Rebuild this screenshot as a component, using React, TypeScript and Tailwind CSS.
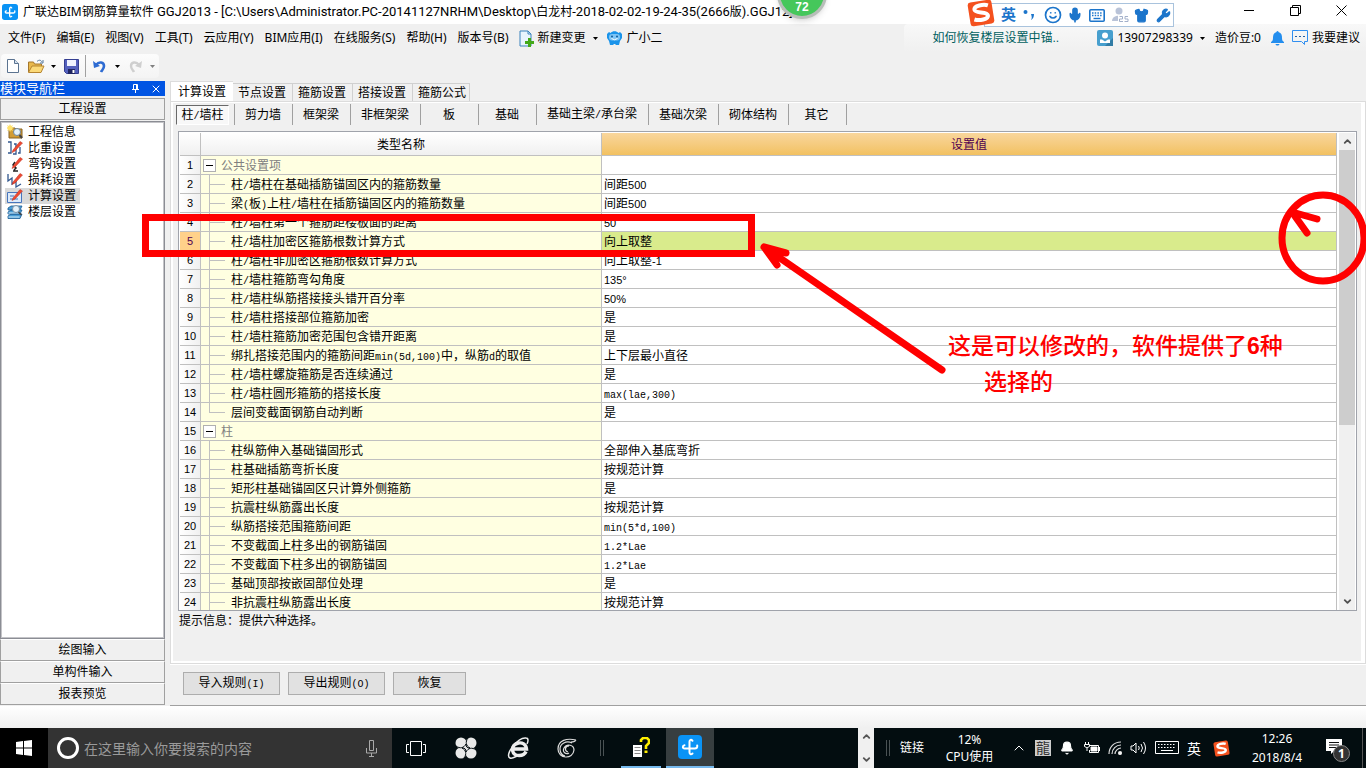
import React from "react";
import { ChevronDown, ChevronUp, Mic, Shirt, Smile, Wrench, Bell, X } from "lucide-react";

const songti = "font-['Liberation_Sans','Noto_Sans_CJK_SC',sans-serif]";
const yahei = "font-['Noto_Sans','Noto_Sans_CJK_SC',sans-serif]";

/* Latin runs take a half-width face beside the full-width Chinese glyphs. */
function Song({ children }: { children: string }) {
  return (
    <>
      {children.split(/([\x20-\x7e°]+)/).map((part, i) => {
        if (i % 2 === 0) return part;
        const numeric = /^[\d°%-]+$/.test(part);
        return (
          <span key={i} className={numeric ? "text-[11px]" : "font-['Liberation_Mono',monospace] text-[10px]"}>{part}</span>
        );
      })}
    </>
  );
}

type Row = { name: string; value?: string; group?: boolean; last?: boolean };

const rows: Row[] = [
  { name: "公共设置项", group: true },
  { name: "柱/墙柱在基础插筋锚固区内的箍筋数量", value: "间距500" },
  { name: "梁(板)上柱/墙柱在插筋锚固区内的箍筋数量", value: "间距500" },
  { name: "柱/墙柱第一个箍筋距楼板面的距离", value: "50" },
  { name: "柱/墙柱加密区箍筋根数计算方式", value: "向上取整" },
  { name: "柱/墙柱非加密区箍筋根数计算方式", value: "向上取整-1" },
  { name: "柱/墙柱箍筋弯勾角度", value: "135°" },
  { name: "柱/墙柱纵筋搭接接头错开百分率", value: "50%" },
  { name: "柱/墙柱搭接部位箍筋加密", value: "是" },
  { name: "柱/墙柱箍筋加密范围包含错开距离", value: "是" },
  { name: "绑扎搭接范围内的箍筋间距min(5d,100)中，纵筋d的取值", value: "上下层最小直径" },
  { name: "柱/墙柱螺旋箍筋是否连续通过", value: "是" },
  { name: "柱/墙柱圆形箍筋的搭接长度", value: "max(lae,300)" },
  { name: "层间变截面钢筋自动判断", value: "是", last: true },
  { name: "柱", group: true },
  { name: "柱纵筋伸入基础锚固形式", value: "全部伸入基底弯折" },
  { name: "柱基础插筋弯折长度", value: "按规范计算" },
  { name: "矩形柱基础锚固区只计算外侧箍筋", value: "是" },
  { name: "抗震柱纵筋露出长度", value: "按规范计算" },
  { name: "纵筋搭接范围箍筋间距", value: "min(5*d,100)" },
  { name: "不变截面上柱多出的钢筋锚固", value: "1.2*Lae" },
  { name: "不变截面下柱多出的钢筋锚固", value: "1.2*Lae" },
  { name: "基础顶部按嵌固部位处理", value: "是" },
  { name: "非抗震柱纵筋露出长度", value: "按规范计算" },
];

function AppLogo({ className }: { className: string }) {
  return (
    <svg viewBox="0 0 24 24" className={className} aria-hidden="true">
      <rect width="24" height="24" rx="4" fill="#0a93f5" />
      <path d="M14.500 5.800c-1.400-1.700-3-1-3 .9v10.600c0 2 1.500 2.600 3 1.200" fill="none" stroke="#fff" strokeWidth="2" strokeLinecap="round" />
      <path d="M6.500 10.200c-2.200.4-2.200 3.300.2 3.300h10c2 0 2.800-1 2.500-3" fill="none" stroke="#fff" strokeWidth="2" strokeLinecap="round" />
    </svg>
  );
}

function SogouLogo({ className }: { className: string }) {
  return (
    <svg viewBox="0 0 28 28" className={className} aria-hidden="true">
      <g transform="rotate(-9 14 14)">
        <rect x="2" y="2" width="24" height="24" rx="3" fill="#f4511e" />
        <path d="M22 7.500C18 5.500 8 5.500 8 9.800c0 4 12.500 3.200 12.500 7.600 0 4.200-9.500 4.200-14 2" fill="none" stroke="#fff" strokeWidth="4" />
      </g>
    </svg>
  );
}

function Caret({ className = "text-black" }: { className?: string }) {
  return (
    <svg viewBox="0 0 5 3" className={`h-[3px] w-[5px] ${className}`} aria-hidden="true">
      <path d="M0 0h5L2.500 3z" fill="currentColor" />
    </svg>
  );
}

function TitleBar() {
  const latin = "font-['Roboto',sans-serif] text-[13px]";
  return (
    <header className="flex h-6 shrink-0 items-center bg-white pl-[2px]">
      <AppLogo className="h-4 w-4" />
      <h1 className={`ml-[5px] flex-1 overflow-hidden whitespace-nowrap text-[12px] font-normal leading-6 ${yahei}`}>
        广联达BIM钢筋算量软件{" "}
        <span className={latin}>GGJ2013 - [C:\Users\Administrator.PC-20141127NRHM\Desktop\</span>白龙村
        <span className={latin}>-2018-02-02-19-24-35(2666</span>版
        <span className={latin}>).GGJ12]</span>
      </h1>
      <div className="flex h-full items-start">
        <button aria-label="最小化" className="flex h-[21px] w-[46px] items-center justify-center">
          <span className="h-px w-[10px] bg-black" />
        </button>
        <button aria-label="还原" className="flex h-[21px] w-[46px] items-center justify-center">
          <svg viewBox="0 0 11 11" className="h-[11px] w-[11px]" fill="none" stroke="#000"><path d="M.5 2.500h8v8h-8zM2.500 2V.5h8v8H9" /></svg>
        </button>
        <button aria-label="关闭" className="mr-[2px] flex h-[21px] w-[46px] items-center justify-center">
          <svg viewBox="0 0 11 11" className="h-[11px] w-[11px]" fill="none" stroke="#000"><path d="M.5.5l10 10M10.500.5l-10 10" /></svg>
        </button>
      </div>
    </header>
  );
}

const menus = ["文件(F)", "编辑(E)", "视图(V)", "工具(T)", "云应用(Y)", "BIM应用(I)", "在线服务(S)", "帮助(H)", "版本号(B)"];

function MenuBar() {
  return (
    <nav className={`flex h-7 shrink-0 items-center whitespace-nowrap pl-2 text-[12px] leading-5 ${yahei}`}>
      <div className="flex gap-[11px]">
        {menus.map((m) => (
          <button key={m}>{m}</button>
        ))}
      </div>
      <button className="ml-[10px] flex items-center">
        <svg viewBox="0 0 15 17" className="mr-1 h-[17px] w-[15px]" aria-hidden="true">
          <path d="M1 1h8l3 3v12H1z" fill="#e8f4fd" stroke="#3b83bd" />
          <path d="M9 1v3h3" fill="none" stroke="#3b83bd" />
          <path d="M9 8h3v3h3v3h-3v3H9v-3H6v-3h3z" fill="#43a819" />
        </svg>
        新建变更
        <span className="ml-[7px]"><Caret /></span>
      </button>
      <button className="ml-2 flex items-center">
        <svg viewBox="0 0 17 16" className="mr-1 h-4 w-[17px]" aria-hidden="true">
          <path d="M1 4l2-2 1.500 1c2-2.500 6-2.500 8 0L14 2l2 2v4l-2 3-1 4h-3l-1-1H8l-1 1H4l-1-4-2-3z" fill="#1b94ea" />
          <rect x="3" y="4" width="11" height="6.500" rx="3" fill="#7cc4f5" />
          <circle cx="6" cy="6.500" r="1" fill="#125c9c" /><circle cx="11" cy="6.500" r="1" fill="#125c9c" />
          <path d="M5.500 8.500q3 2.500 6 0" stroke="#fff" fill="none" />
        </svg>
        广小二
      </button>
      <div className="ml-auto flex h-full items-center rounded-tl bg-gradient-to-b from-[#f8f8f8] to-[#f0f0f0] pl-7 pr-[6px]">
        <a href="#help" className={`w-[165px] text-[#006060] ${songti}`}>如何恢复楼层设置中锚..</a>
        <button className="flex items-center">
          <svg viewBox="0 0 16 16" className="mr-1 h-4 w-4" aria-hidden="true">
            <rect width="16" height="16" rx="2" fill="#479fce" /><path d="M8 16l8-8v8z" fill="#317ca5" />
            <circle cx="8" cy="5.500" r="3" fill="#fff" /><path d="M3 13V9.500h2l3 2 3-2h2V13z" fill="#fff" />
          </svg>
          13907298339
          <span className="ml-[7px]"><Caret /></span>
        </button>
        <span className="ml-[10px]">造价豆:0</span>
        <button aria-label="消息" className="ml-[10px]">
          <svg viewBox="0 0 13 15" className="h-[15px] w-[13px]"><path d="M6.500 0c1 0 1 1 1 1 3 1 3.500 3 3.500 6 0 2 .5 3 2 4v1H0v-1c1.500-1 2-2 2-4 0-3 .5-5 3.500-6 0 0 0-1 1-1zM4.500 13h4c-.5 2-3.500 2-4 0z" fill="#248eee" /></svg>
        </button>
        <button className="ml-2 flex items-center">
          <svg viewBox="0 0 16 16" className="mr-1 h-4 w-4" fill="none" stroke="#318ff0"><path d="M.5.5h15v11h-3v3l-3-3h-9z" /><path d="M3 6.500h2M7 6.500h2M11 6.500h2" stroke="#245fa5" /></svg>
          我要建议
        </button>
      </div>
    </nav>
  );
}

function Toolbar() {
  return (
    <div className="flex h-[29px] shrink-0 items-start pl-[1px] pt-[2px]">
      <div className="flex h-6 items-center rounded bg-gradient-to-b from-[#fcfcfc] to-[#f4f4f4] pl-[6px] pr-1">
        <button aria-label="新建">
          <svg viewBox="0 0 12 14" className="h-[14px] w-3"><path d="M.5.5h7l4 4v9H.5z" fill="#fff" stroke="#5b7390" /><path d="M7.500.5v4h4" fill="#d5e2f0" stroke="#5b7390" /></svg>
        </button>
        <button aria-label="打开" className="ml-[9px] flex items-center gap-[6px]">
          <svg viewBox="0 0 17 15" className="h-[15px] w-[17px]"><path d="M.5 13V3h5l1 2h7v3" fill="#e9b94d" stroke="#a4772c" /><path d="M.5 13.500L4 7h12l-3 6.500z" fill="#fbd978" stroke="#b68531" /><path d="M9 2.500c2-2 4-1.500 5 .5m1-2v3h-3" fill="none" stroke="#54789e" /></svg>
          <Caret />
        </button>
        <button aria-label="保存" className="ml-2">
          <svg viewBox="0 0 15 15" className="h-[15px] w-[15px]"><path d="M.5.5h14v14h-12l-2-2z" fill="#5360bd" stroke="#353e91" /><path d="M3 1h9v6H3z" fill="#eff2ff" /><path d="M4 10h7v5H4z" fill="#1f2561" /><path d="M8.500 11h2v3h-2z" fill="#fff" /></svg>
        </button>
        <span className="ml-[6px] h-[22px] w-px bg-[#a0a0a0]" />
        <button aria-label="撤销" className="ml-[7px] flex items-center gap-2">
          <svg viewBox="0 0 14 13" className="h-[13px] w-[14px]"><path d="M3 5c3-4 8-3 8 1 0 3-2 4-3 6" fill="none" stroke="#2d6bd2" strokeWidth="2.600" /><path d="M0 1l1 7 6-2z" fill="#2d6bd2" /></svg>
          <Caret />
        </button>
        <button aria-label="重做" className="ml-2 flex items-center gap-2">
          <svg viewBox="0 0 14 13" className="h-[13px] w-[14px]"><path d="M11 5C8 1 3 2 3 6c0 3 2 4 3 6" fill="none" stroke="#cfcfcf" strokeWidth="2.400" /><path d="M14 1l-1 7-6-2z" fill="#cfcfcf" /></svg>
          <Caret className="text-[#808080]" />
        </button>
      </div>
    </div>
  );
}

function NavIcon({ kind }: { kind: number }) {
  const pencil = <path d="M6 10l7-8.500L15.500 3 8 11l-3 1.500z" fill="#ef4a32" stroke="#b92a1b" strokeWidth=".5" />;
  return (
    <svg viewBox="0 0 16 16" className="h-4 w-4 shrink-0" aria-hidden="true">
      {kind === 0 && (<><path d="M2 4h6l1 1h6v9H2z" fill="#d29c35" stroke="#876225" /><path d="M3 0l1 2 2-1-1 2 2 1-2 1 1 2-2-1-1 2-1-2-2 1 1-2-2-1 2-1-1-2 2 1z" fill="#ffe16b" /><circle cx="10" cy="8" r="3.500" fill="#e4f2fb" stroke="#6d8499" /><path d="M12.500 11l2.500 3" stroke="#444" strokeWidth="2" /></>)}
      {kind === 1 && (<><path d="M1 2h3v11H1M7 4h2v10H6M13 7v6h-2" fill="none" stroke="#31578e" strokeWidth="1.300" />{pencil}</>)}
      {kind === 2 && (<><path d="M8 6l-2 3 3 3-2 2M6 15h5" fill="none" stroke="#222" strokeWidth="1.500" />{pencil}</>)}
      {kind === 3 && (<><path d="M1 2v7l4-3v6l4-3v6l5-3" fill="none" stroke="#31578e" strokeWidth="1.300" />{pencil}</>)}
      {kind === 4 && (<><path d="M.5 4.500h14v10H.5z" fill="#dceafa" stroke="#4675bd" /><path d="M3 8h4M3 11h8" stroke="#4675bd" />{pencil}</>)}
      {kind === 5 && (<><path d="M1 12l3-2h11l-2 4.500H1zM1 8l3-2h11l-2 4H1zM1 4l3-2h11l-2 4H1z" fill="#4b9ed6" stroke="#1b5c94" strokeWidth=".8" /><path d="M1.500 13h11M1.500 9h11" stroke="#d9effc" /><circle cx="9" cy="5" r="3.500" fill="#e4f2fb" stroke="#7890a5" /><path d="M11.500 8l3 3" stroke="#444" strokeWidth="1.500" /></>)}
    </svg>
  );
}

function Sidebar() {
  const items = ["工程信息", "比重设置", "弯钩设置", "损耗设置", "计算设置", "楼层设置"];
  const bar = "h-[22px] w-full shrink-0 border border-[#a0a0a0] border-t-white bg-[#f0f0f0] text-center leading-5";
  return (
    <aside className="mr-1 flex w-[166px] shrink-0 flex-col pb-[1px] pr-[1px] text-[12px]">
      <div className="flex h-[15px] shrink-0 items-center bg-[#0054e3] text-white">
        <h2 className="flex-1 text-[13px] font-normal leading-[15px]">模块导航栏</h2>
        <button aria-label="固定" className="mr-[10px]">
          <svg viewBox="0 0 9 9" className="h-[9px] w-[9px]" fill="none" stroke="#fff"><path d="M2.500 5V.5h4V5M1 5.500h7M4.500 6v3M5.500 1v4" /></svg>
        </button>
        <button aria-label="关闭导航" className="mr-[3px]">
          <X className="h-3 w-3" strokeWidth={2} />
        </button>
      </div>
      <button className="mt-[2px] h-[22px] w-full shrink-0 border border-[#a0a0a0] bg-[#f0f0f0] text-center leading-5">工程设置</button>
      <ul className="mt-[1px] flex-1 border border-[#8b8d94] bg-white pl-1 pt-[2px] ring-1 ring-inset ring-[#c4c4c8]">
        {items.map((t, i) => (
          <li key={t}>
            <button className={`flex h-4 items-center gap-[5px] pl-[2px] pr-1 leading-4 ${i === 4 ? "bg-[#d9d9d9]" : ""}`}>
              <NavIcon kind={i} />
              {t}
            </button>
          </li>
        ))}
      </ul>
      <button className={bar}>绘图输入</button>
      <button className={bar}>单构件输入</button>
      <button className={bar}>报表预览</button>
    </aside>
  );
}

function SettingsTable() {
  const line = "border-[#c0c0c0]";
  return (
    <div className="ml-1 mr-1 flex min-h-0 flex-1 overflow-hidden border border-[#a0a3ab] bg-white pl-[1px] pt-[1px]">
      <div className="min-w-0 flex-1 overflow-hidden">
        <table className="w-full table-fixed border-separate border-spacing-0 text-[12px] leading-[17px]">
          <colgroup>
            <col className="w-[21px]" />
            <col className="w-[401px]" />
            <col />
          </colgroup>
          <thead>
            <tr>
              <th className={`h-[23px] border-b border-r bg-gradient-to-b from-white to-[#f0f0f0] p-0 ${line}`} />
              <th className={`h-[23px] border-b border-r bg-gradient-to-b from-white to-[#f0f0f0] p-0 pt-[2px] font-normal ${line}`}>类型名称</th>
              <th className={`h-[23px] border-b border-r bg-gradient-to-b from-[#f9d69c] to-[#f2c160] p-0 pt-[2px] font-normal text-[#500050] ${line}`}>设置值</th>
            </tr>
          </thead>
          <tbody>
            {rows.map((r, i) => {
              const on = i === 4;
              return (
                <tr key={i}>
                  <td className={`h-[19px] border-b border-r p-0 text-center text-[11px] ${line} ${on ? "bg-[#ffd18a] text-[#500050]" : "bg-gradient-to-r from-white to-[#f0f0f0]"}`}>{i + 1}</td>
                  <td className={`h-[19px] border-b border-r bg-[#ffffe1] p-0 ${line}`}>
                    <div className="flex h-[18px] items-start whitespace-nowrap">
                      {r.group ? (
                        <button aria-label="折叠" className="ml-[2px] mr-[5px] mt-[3px] flex h-[13px] w-[13px] items-center justify-center border border-[#b0b0b0] bg-white">
                          <span className="h-px w-[7px] bg-black" />
                        </button>
                      ) : (
                        <span className="ml-2 mr-[6px] w-4">
                          <span className="block h-[10px] border-b border-l border-[#c0c0c0]" />
                          <span className={`block h-[9px] ${r.last ? "" : "border-l border-[#c0c0c0]"}`} />
                        </span>
                      )}
                      <span className={`pt-[2px] leading-4 ${r.group ? "text-[#808080]" : ""}`}><Song>{r.name}</Song></span>
                    </div>
                  </td>
                  <td className={`h-[19px] border-b border-r py-0 pl-[2px] pr-0 ${line} ${on ? "bg-[#d9eb8c]" : "bg-white"}`}>
                    <div className="h-[18px] whitespace-nowrap pt-[2px] leading-4">{r.value ? <Song>{r.value}</Song> : null}</div>
                  </td>
                </tr>
              );
            })}
          </tbody>
        </table>
      </div>
      <div className="ml-[2px] mr-[1px] flex w-4 shrink-0 flex-col items-center bg-[#f0f0f0]">
        <button aria-label="向上滚动" className="flex h-[17px] items-center text-[#505050]"><ChevronUp className="h-[11px] w-[11px]" strokeWidth={4} /></button>
        <div className="min-h-0 w-full flex-1"><div className="h-[62%] w-full bg-[#cdcdcd]" /></div>
        <button aria-label="向下滚动" className="flex h-[17px] items-center text-[#505050]"><ChevronDown className="h-[11px] w-[11px]" strokeWidth={4} /></button>
      </div>
    </div>
  );
}

function Workspace() {
  const tabs = ["计算设置", "节点设置", "箍筋设置", "搭接设置", "箍筋公式"];
  const subs = ["剪力墙", "框架梁", "非框架梁", "板", "基础", "基础主梁/承台梁", "基础次梁", "砌体结构", "其它"];
  const push = "h-[23px] border border-[#adadad] bg-[#e1e1e1] leading-[21px]";
  return (
    <main className="flex min-w-0 flex-1 flex-col text-[12px]">
      <div className="flex h-[20px] shrink-0 items-end" role="tablist">
        {tabs.map((t, i) => (
          <button
            key={t}
            role="tab"
            aria-selected={i === 0}
            className={i === 0 ? "h-[20px] w-[63px] border-l border-t border-[#dcdcdc] bg-white leading-[18px]" : "h-[18px] border-r border-t border-[#d0d0d0] bg-[#f0f0f0] pl-[5px] pr-[6px] leading-4 last:pr-[3px]"}
          >
            {t}
          </button>
        ))}
      </div>
      <section className="flex min-h-0 flex-1 flex-col border border-[#dcdcdc] bg-white pb-[2px] pl-[2px] pr-1 pt-[1px]">
        <div className="flex min-h-0 flex-1 flex-col bg-[#f0f0f0] pl-[1px]">
          <div className="flex h-[28px] shrink-0 items-start pl-[2px] pt-[1px]">
            <button className="mr-[5px] mt-[1px] h-[20px] w-[53px] border border-b-white border-l-[#696969] border-r-white border-t-[#696969] bg-[#f8f8f8] leading-[18px]"><Song>柱/墙柱</Song></button>
            <span className="h-[21px] w-px bg-[#a0a0a0]" />
            {subs.map((t) => (
              <button key={t} className="h-[21px] min-w-[58px] border-r border-[#a0a0a0] px-[10px] leading-[18px] last:pr-[11px]"><span className="pr-[1px]"><Song>{t}</Song></span></button>
            ))}
          </div>
          <SettingsTable />
          <p className="h-[50px] shrink-0 pl-[5px] leading-5">提示信息：提供六种选择。</p>
        </div>
      </section>
      <div className="flex h-[42px] shrink-0 items-start gap-2 border-b border-t border-b-[#a0a0a0] border-t-white pl-[13px] pt-[7px]">
        <button className={`${push} w-[97px]`}><Song>导入规则(I)</Song></button>
        <button className={`${push} w-[97px]`}><Song>导出规则(O)</Song></button>
        <button className={`${push} w-[73px]`}>恢复</button>
      </div>
    </main>
  );
}

function Taskbar() {
  const cell = "flex h-10 shrink-0 items-center justify-center";
  return (
    <footer className={`flex h-10 shrink-0 items-center bg-[#030d10] text-[12px] text-white ${yahei}`}>
      <button aria-label="开始" className={`${cell} w-12 bg-black`}>
        <svg viewBox="0 0 16 16" className="h-4 w-4" fill="#fff"><path d="M0 2l7-1v6.500H0zM8 .9L16 0v7.500H8zM0 8.500h7V15l-7-1zM8 8.500h8V16l-8-1z" /></svg>
      </button>
      <label className="flex h-10 w-[344px] shrink-0 items-center bg-[#333] pl-[9px] pr-[15px]">
        <span className="mr-[5px] h-[22px] w-[22px] rounded-full border-[3px] border-white" />
        <input aria-label="搜索" placeholder="在这里输入你要搜索的内容" className="min-w-0 flex-1 bg-transparent text-[14px] outline-none placeholder:text-[#9a9a9a]" />
        <svg viewBox="0 0 11 17" className="h-[17px] w-[11px]" fill="none" stroke="#aaa"><path d="M3.500.5h4v10h-4zM.5 8v5h10V8M5.500 13v3M3 16.500h5" /></svg>
      </label>
      <button aria-label="任务视图" className={`${cell} w-12`}>
        <svg viewBox="0 0 20 15" className="h-[15px] w-5" fill="none" stroke="#fff"><path d="M4.500.5h11v14h-11zM3 3.500H.5v8H3M17 3.500h2.500v8H17" /></svg>
      </button>
      <button aria-label="浏览器" className={`${cell} w-[52px]`}>
        <svg viewBox="0 0 22 22" className="h-[22px] w-[22px]">
          <g fill="#e9e9e9"><circle cx="6" cy="6" r="5.500" /><circle cx="16" cy="6" r="5.500" /><circle cx="6" cy="16" r="5.500" /><circle cx="16" cy="16" r="5.500" /><rect x="5" y="5" width="12" height="12" /></g>
          <path d="M1 9c4 3 8 2 10-2M13 1c-3 4-2 8 2 10M21 13c-4-3-8-2-10 2M9 21c3-4 2-8-2-10M11 7c0 3 1 4 4 4M11 15c0-3-1-4-4-4" fill="none" stroke="#030d10" strokeWidth="1" />
        </svg>
      </button>
      <button aria-label="Internet Explorer" className={`${cell} w-[52px]`}>
        <svg viewBox="0 0 24 24" className="h-6 w-6" fill="none" stroke="#eee"><path d="M20 15.500c-2 5-12 6-13.500-1-1.500-8 13-11.500 14-1.500H7" strokeWidth="3.400" /><path d="M4 22c-6-3 8-21 16-20 3 0 2 4 1 6M4 22c2 1 5-1 7-2" strokeWidth="1.500" /></svg>
      </button>
      <button aria-label="音乐" className={`${cell} w-[46px]`}>
        <svg viewBox="0 0 20 20" className="h-5 w-5" fill="none" stroke="#ddd" strokeWidth="1.200"><path d="M19 2C10 0 1 2 1 11c0 10 15 11 16 1 0-5-7-7-10-2-2 4 2 7 5 5M19 2c-1 2-3 2-5 2M15 5C9 2 3 6 3 11c0 4 2 6 5 7M12 8c-4 0-5 5-1 6" /></svg>
      </button>
      <span className="ml-[10px] h-4 w-[4px] border-x border-[#4a5254]" />
      <button aria-label="文档帮助" className="ml-[17px] flex h-10 w-10 shrink-0 items-center justify-center border-b-2 border-[#76b9ed]">
        <svg viewBox="0 0 18 20" className="h-5 w-[18px]"><path d="M1 8h9v12H1z" fill="#fff" /><path d="M2.500 10.500h6M2.500 13.500h6M2.500 16.500h6" stroke="#888" /><path d="M9 5V3l2-2h4l2 2v3l-3 3v3" fill="none" stroke="#ffef00" strokeWidth="2.600" /><path d="M12.500 13.500h3V16h-3z" fill="#ffef00" /></svg>
      </button>
      <button aria-label="广联达" className="ml-[5px] flex h-10 w-12 shrink-0 items-center justify-center border-b-2 border-[#76b9ed] bg-[#373e40]">
        <AppLogo className="h-6 w-6" />
      </button>
      <span className="flex-1" />
      <div className="flex h-10 w-4 shrink-0 flex-col items-center justify-between bg-[#f0f0f0] py-[3px] text-[#555]">
        <ChevronUp className="h-[11px] w-[11px]" strokeWidth={4} />
        <ChevronDown className="h-[11px] w-[11px]" strokeWidth={4} />
      </div>
      <span className="ml-3 h-4 w-[4px] border-x border-[#4a5254]" />
      <span className="ml-[10px] w-[44px]">链接</span>
      <div className="w-[51px] whitespace-nowrap text-center leading-[17px]">12%<br />CPU使用</div>
      <button aria-label="更多" className="ml-[16px]"><ChevronUp className="h-4 w-4" strokeWidth={1.5} /></button>
      <span className="ml-2 flex h-4 w-4 items-center justify-center bg-[#ccc] text-[14px] leading-4 text-[#333]">龍</span>
      <Bell className="ml-[9px] h-[14px] w-[14px] fill-white" />
      <svg viewBox="0 0 16 12" className="ml-[10px] h-3 w-4" fill="none" stroke="#fff"><path d="M5.500 3.500h9v7h-9V8M15.500 5v4" /><path d="M7 5h6v4H7z" fill="#fff" /><path d="M1.500 0v2M4.500 0v2M.5 2.500h5v2l-2 1h-1l-2-1zM3 5v4" /></svg>
      <svg viewBox="0 0 14 14" className="ml-2 h-[14px] w-[14px]" fill="none" stroke="#ddd" strokeWidth="1.200"><path d="M1 13C1 6 6 1 13 1M4 13c0-5 4-9 9-9M7 13c0-3 3-6 6-6" /><circle cx="12" cy="12" r="1.500" fill="#fff" /></svg>
      <svg viewBox="0 0 17 14" className="ml-2 h-[14px] w-[17px]" fill="none" stroke="#fff"><path d="M1 5h2l3-3v10L3 9H1zM8.500 5q1.500 2 0 4M11 3q3 4 0 8M13.500 1q4 6 0 12" /></svg>
      <svg viewBox="0 0 24 14" className="ml-2 h-[14px] w-6" fill="none" stroke="#fff"><path d="M.5.5h23v12H.5z" /><path d="M3 3.500h18M3 6.500h18" strokeDasharray="1.500 1.500" /><path d="M6 9.500h12" /></svg>
      <span className="ml-2 text-[14px]">英</span>
      <SogouLogo className="ml-3 h-[17px] w-[17px]" />
      <div className="ml-[20px] w-[54px] whitespace-nowrap text-center leading-[19px]">12:26<br />2018/8/4</div>
      <button aria-label="通知" className="relative ml-[21px] mr-[13px] h-6 w-6">
        <svg viewBox="0 0 24 24" className="h-6 w-6"><path d="M1 3h16v12H9l-3 3v-3H1z" fill="#fff" /><path d="M4 6.500h10M4 9h10M4 11.500h7" stroke="#111" /></svg>
        <span className="absolute left-2 top-[9px] flex h-[17px] w-[17px] items-center justify-center rounded-full border border-[#888] bg-[#333] text-[12px] font-bold">1</span>
      </button>
      <span className="mr-[3px] h-10 w-px bg-[#555]" />
    </footer>
  );
}

function InputMethodBar() {
  return (
    <div className="absolute right-48 top-[3px] flex h-6 w-[190px] items-center gap-[7px] border border-[#a9c3dd] bg-white pl-4 text-[#1c75cb]">
      <SogouLogo className="absolute -left-[18px] -top-[5px] h-[28px] w-[28px]" />
      <span className="text-[15px] font-bold leading-5">英</span>
      <svg viewBox="0 0 12 12" className="h-3 w-3 shrink-0" fill="#1c75cb"><circle cx="2.500" cy="3" r="2" /><path d="M8 5h3c0 3-1 5-3 6 1-2 1-3 0-6z" /></svg>
      <Smile className="ml-[2px] h-[18px] w-[18px] shrink-0" strokeWidth={2.300} />
      <Mic className="-ml-[2px] h-4 w-4 shrink-0 fill-[#1c75cb]" strokeWidth={2.500} />
      <svg viewBox="0 0 16 13" className="-ml-[1px] h-[13px] w-4 shrink-0" fill="none" stroke="#1c75cb"><rect x=".8" y=".8" width="14.400" height="11.400" rx="1" strokeWidth="1.600" /><path d="M3 4h10M3 6.500h10" strokeWidth="1.400" strokeDasharray="1.500 1.200" /><path d="M4.500 9.500h7" strokeWidth="1.400" /></svg>
      <svg viewBox="0 0 17 16" className="h-4 w-[17px] shrink-0" fill="#b9c3d8"><circle cx="7" cy="4" r="3.500" /><path d="M0 14c0-7 13-7 14 0z" /><path d="M6 8h11v8H6z" fill="#fff" /><path d="M7.500 9.500h3V12h-3v2.500h3.500M16 9.500h-3V12h3v2.500h-3.500" fill="none" stroke="#a3b0ca" /></svg>
      <Shirt className="-ml-[2px] h-[15px] w-[15px] shrink-0 fill-[#1c75cb]" />
      <Wrench className="h-[15px] w-[15px] shrink-0 fill-[#1c75cb]" />
    </div>
  );
}

function Annotations() {
  return (
    <div className="pointer-events-none absolute inset-0 overflow-hidden text-[#f00]">
      <div className="absolute left-[142px] top-[214px] h-[43px] w-[613px] border-[7px] border-[#f00]" />
      <svg viewBox="0 0 190 136" className="absolute left-[758px] top-[240px] h-[136px] w-[190px]" fill="none" stroke="#f00" strokeWidth="7" strokeLinecap="round" strokeLinejoin="round">
        <path d="M184 130L6 7M28 13L6 7l13 18" />
      </svg>
      <svg viewBox="0 0 90 96" className="absolute -right-[2px] top-[190px] h-[96px] w-[90px]" fill="none" stroke="#f00" strokeWidth="7" strokeLinecap="round" strokeLinejoin="round">
        <ellipse cx="45" cy="48" rx="41" ry="43" /><path d="M39 29L14 22l15 21" />
      </svg>
      <p className="absolute left-[948px] top-[328px] whitespace-pre text-[23px] font-medium leading-9">
        这是可以修改的，软件提供了<b>6</b>种<br />
        <span className="pl-9">选择的</span>
      </p>
    </div>
  );
}

export default function App() {
  return (
    <div className={`relative flex h-screen min-h-[480px] w-full flex-col overflow-hidden bg-[#f0f0f0] text-black ${songti}`}>
      <TitleBar />
      <MenuBar />
      <Toolbar />
      <div className="flex min-h-0 flex-1">
        <Sidebar />
        <Workspace />
      </div>
      <div className="h-[22px] shrink-0 bg-gradient-to-b from-white to-[#f0f0f0]" />
      <Taskbar />
      <InputMethodBar />
      <div className="absolute -top-[31px] left-[777px] flex h-[50px] w-[50px] items-end justify-center rounded-full border-[3px] border-[#b8beb9] bg-[#45c75b] text-[12px] font-bold text-white shadow-md">
        <span className="pb-[1px] leading-4">72</span>
      </div>
      <Annotations />
    </div>
  );
}
